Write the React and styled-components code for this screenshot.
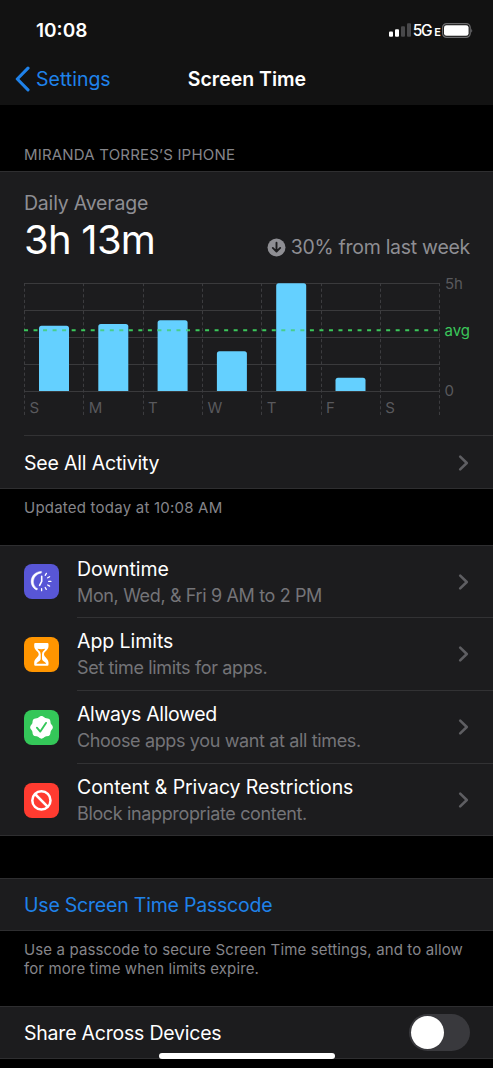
import React from "react";
import styled, { createGlobalStyle } from "styled-components";

const GlobalStyle = createGlobalStyle`
  * { box-sizing: border-box; }
  body { margin: 0; background: #000; }
`;

const Screen = styled.div`
  position: relative;
  width: 493px;
  height: 1068px;
  overflow: hidden;
  background: #000;
  color: #fff;
  font-family: Inter, "Liberation Sans", sans-serif;
  font-size: 19.5px;
  display: flex;
  flex-direction: column;
  white-space: nowrap;
`;

const Header = styled.header`
  height: 105px;
  flex: none;
  background: #121212;
`;

const StatusBar = styled.div`
  display: flex;
  justify-content: space-between;
  align-items: center;
  height: 60px;
  padding: 0 20px 0 36px;
`;

const Clock = styled.span`
  font-size: 19px;
  font-weight: 600;
`;

const StatusIcons = styled.div`
  display: flex;
  align-items: center;
`;

const Network = styled.span`
  font-size: 15.5px;
  font-weight: 500;
  letter-spacing: -1.3px;
  margin: 0 1px 0 1.5px;
  small { font-size: 11px; margin-left: 3px; font-weight: 600; letter-spacing: 0; }
`;

const NavBar = styled.nav`
  display: grid;
  grid-template-columns: 1fr auto 1fr;
  align-items: center;
  height: 38px;
  padding: 0 13px 0 14px;
`;

const BackLink = styled.a`
  display: flex;
  align-items: center;
  gap: 6px;
  color: #1f82ea;
`;

const Title = styled.h1`
  margin: 0;
  font-size: 19.5px;
  font-weight: 600;
`;

const Caption = styled.div`
  height: ${(p) => p.$height}px;
  flex: none;
  padding: ${(p) => p.$top}px 24px 0;
  font-size: 15px;
  line-height: 19.3px;
  letter-spacing: ${(p) => p.$tracking || 0}px;
  color: #85858a;
`;

const Card = styled.section`
  flex: none;
  height: ${(p) => p.$height}px;
  background: #1c1c1e;
  border-top: 1px solid #2e2e30;
  border-bottom: 1px solid #2e2e30;
`;

const Summary = styled.div`
  height: 111px;
  padding: 19px 23px 0 24px;
`;

const SummaryLabel = styled.div`
  color: #8e8e93;
  line-height: 24px;
  letter-spacing: -0.2px;
`;

const SummaryRow = styled.div`
  display: flex;
  justify-content: space-between;
  align-items: flex-start;
`;

const Total = styled.div`
  font-size: 40px;
  line-height: 50px;
  letter-spacing: -0.75px;
`;

const Trend = styled.div`
  display: flex;
  align-items: center;
  gap: 5px;
  padding-top: 20px;
  line-height: 24px;
  letter-spacing: -0.28px;
  color: #8e8e93;
`;

const Chart = styled.svg`
  display: block;
  overflow: visible;
  font-size: 15px;
`;

const Divider = styled.hr`
  height: 1px;
  border: 0;
  margin: 0 0 0 ${(p) => p.$inset}px;
  background: #323234;
`;

const Row = styled.div`
  display: flex;
  align-items: center;
  justify-content: space-between;
  height: ${(p) => p.$height}px;
  padding: 0 23px 0 24px;
  color: ${(p) => p.$color || "#fff"};
  letter-spacing: ${(p) => p.$tracking || 0}px;
`;

const Tile = styled.div`
  width: 35px;
  height: 35px;
  flex: none;
  border-radius: 8px;
  background: ${(p) => p.$color};
  svg { display: block; }
`;

const Texts = styled.div`
  flex: 1;
  padding-left: 18px;
`;

const Name = styled.div`
  padding-top: 1px;
  line-height: 27px;
  letter-spacing: ${(p) => p.$tracking}px;
`;

const Detail = styled.div`
  font-size: 18px;
  line-height: 26px;
  color: #747478;
  letter-spacing: -0.36px;
`;

const Switch = styled.div`
  width: 61px;
  height: 37px;
  padding: 2px;
  border-radius: 19px;
  background: #39393d;
`;

const Knob = styled.div`
  width: 33px;
  height: 33px;
  border-radius: 50%;
  background: #fff;
`;

const HomeIndicator = styled.div`
  position: absolute;
  left: 159px;
  top: 1053px;
  width: 176px;
  height: 6px;
  border-radius: 3px;
  background: #fff;
`;

const Chevron = () => (
  <svg width="12" height="18" viewBox="0 0 12 18" fill="none">
    <path d="M2.2 2.6 L8.8 9 L2.2 15.4" stroke="#5e5e62" strokeWidth="2.6" strokeLinecap="round" strokeLinejoin="round" />
  </svg>
);

const DAYS = [
  { label: "S", top: 42.7 },
  { label: "M", top: 41 },
  { label: "T", top: 37.3 },
  { label: "W", top: 68.3 },
  { label: "T", top: 0.3 },
  { label: "F", top: 94.7 },
  { label: "S", top: null },
];
const STEP = 59.3;
const BASE = 108;

const barPath = (x, top) =>
  `M${x} ${BASE} V${top + 2.5} q0 -2.5 2.5 -2.5 h25 q2.5 0 2.5 2.5 V${BASE} Z`;

function UsageChart() {
  return (
    <Chart width="493" height="152" viewBox="0 0 493 152">
      {[0, 27, 54, 81, 108].map((y) => (
        <rect key={y} x="24" y={y} width="416" height="1" fill="#3a3a3c" />
      ))}
      {[0, 1, 2, 3, 4, 5, 6, 7].map((i) => {
        const x = Math.round(24 + i * STEP) + 0.5;
        return <path key={i} d={`M${x} 0 V132`} stroke="#3c3c3f" strokeDasharray="3.2 2.4" />;
      })}
      <path d="M24 47.2 H440" stroke="#3bc75b" strokeWidth="2" strokeDasharray="4 5.53" />
      {DAYS.map((d, i) => (
        <g key={i}>
          {d.top !== null && <path d={barPath(39 + i * STEP, d.top)} fill="#64d0ff" />}
          <text x={29.5 + i * STEP} y="130" fill="#59595d">{d.label}</text>
        </g>
      ))}
      <path d="M24 47.2 H380" stroke="#48cd8d" strokeWidth="2" strokeDasharray="4 5.53" clipPath="url(#bars)" />
      <clipPath id="bars">
        {DAYS.map((d, i) => d.top !== null && <path key={i} d={barPath(39 + i * STEP, d.top)} />)}
      </clipPath>
      <text x="445" y="6" fill="#59595d">5h</text>
      <text x="444.5" y="53" fill="#3bc75b">avg</text>
      <text x="444.5" y="113" fill="#59595d">0</text>
    </Chart>
  );
}

const DowntimeIcon = () => (
  <svg width="35" height="35" viewBox="0 0 35 35" fill="none" stroke="#fff" strokeLinecap="round">
    <path d="M17.2 7.4 C4.9 8.2 4.4 23 13 26 L13.5 24.6 C7.2 21.4 8 10.6 17.3 8.9 Z" fill="#fff" strokeWidth="0.5" strokeLinejoin="round" />
    <path d="M17.7 12.2 V17.4 L15.6 21.4" strokeWidth="1.6" strokeLinejoin="round" />
    <path d="M21.2 11.3 L22.4 9.4 M23.7 13.8 L25.6 12.7 M24.7 17.4 H26.9 M23.7 21 L25.6 22.1 M21.2 23.5 L22.3 25.4 M17.6 24.6 V26.7" strokeWidth="1.3" />
  </svg>
);

const HourglassIcon = () => (
  <svg width="35" height="35" viewBox="0 0 35 35">
    <path d="M11.3 6 H23.4 Q24.5 6 24.5 7.3 V9.3 C24.5 13.2 20 14.5 20 17.3 C20 20.1 24.5 21.6 24.5 25.6 V27.5 Q24.5 28.8 23.4 28.8 H11.3 Q10.2 28.8 10.2 27.5 V25.6 C10.2 21.6 14.7 20.1 14.7 17.3 C14.7 14.5 10.2 13.2 10.2 9.3 V7.3 Q10.2 6 11.3 6 Z" fill="#fff" />
    <path d="M13.5 11.8 Q17.4 12.7 21.2 11.8 C20 14 18 14.7 18 17.3 V22 C18.3 24.3 21.5 24.7 22.2 26.8 H12.5 C13.2 24.7 16.4 24.3 16.7 22 V17.3 C16.7 14.7 14.7 14 13.5 11.8 Z" fill="#ff9500" />
  </svg>
);

const sealPath = () => {
  const points = [];
  for (let i = 0; i < 120; i += 1) {
    const a = (i / 120) * Math.PI * 2;
    const r = 10.7 + 0.65 * Math.cos(8 * a);
    points.push(`${(17.5 + r * Math.sin(a)).toFixed(2)} ${(17.3 - r * Math.cos(a)).toFixed(2)}`);
  }
  return `M${points.join("L")}Z`;
};

const SealIcon = () => (
  <svg width="35" height="35" viewBox="0 0 35 35">
    <path d={sealPath()} fill="#fff" />
    <path d="M12.9 17.7 L16.3 21.6 L22 12.9" fill="none" stroke="#34c759" strokeWidth="1.9" strokeLinecap="round" strokeLinejoin="round" />
  </svg>
);

const BlockIcon = () => (
  <svg width="35" height="35" viewBox="0 0 35 35" fill="none" stroke="#fff" strokeWidth="2.5">
    <circle cx="17.4" cy="17.4" r="9.1" />
    <path d="M11 11 L23.8 23.8" />
  </svg>
);

const OPTIONS = [
  { name: "Downtime", tracking: -0.1, detail: "Mon, Wed, & Fri 9 AM to 2 PM", color: "#5856d6", Icon: DowntimeIcon },
  { name: "App Limits", tracking: -0.05, detail: "Set time limits for apps.", color: "#ff9500", Icon: HourglassIcon },
  { name: "Always Allowed", tracking: -0.34, detail: "Choose apps you want at all times.", color: "#34c759", Icon: SealIcon },
  { name: "Content & Privacy Restrictions", tracking: -0.08, detail: "Block inappropriate content.", color: "#ff3b30", Icon: BlockIcon },
];

export default function App() {
  return (
    <Screen>
      <GlobalStyle />
      <Header>
        <StatusBar>
          <Clock>10:08</Clock>
          <StatusIcons>
            <svg width="22" height="14" viewBox="0 0 22 14">
              <rect x="0" y="8.5" width="4" height="5.3" rx="1" fill="#fff" />
              <rect x="6" y="6.2" width="4" height="7.6" rx="1" fill="#fff" />
              <rect x="12" y="3.2" width="4" height="10.6" rx="1" fill="#48484a" />
              <rect x="18" y="0.2" width="4" height="13.6" rx="1" fill="#48484a" />
            </svg>
            <Network>5G<small>E</small></Network>
            <svg width="31" height="15" viewBox="0 0 31 15">
              <rect x="0.6" y="0.6" width="27.6" height="13.8" rx="4" fill="none" stroke="#6c6c6e" strokeWidth="1.2" />
              <rect x="2" y="2.2" width="24.6" height="10.6" rx="2.4" fill="#fff" />
              <path d="M29.3 5.2 Q31 7.5 29.3 9.8 Z" fill="#77777a" />
            </svg>
          </StatusIcons>
        </StatusBar>
        <NavBar>
          <BackLink>
            <svg width="16" height="26" viewBox="0 0 16 26" fill="none">
              <path d="M14 2.2 L3.3 13 L14 23.8" stroke="#1f82ea" strokeWidth="3.1" strokeLinecap="round" strokeLinejoin="round" />
            </svg>
            Settings
          </BackLink>
          <Title>Screen Time</Title>
        </NavBar>
      </Header>

      <Caption $height={66} $top={39.5} $tracking={0.19}>MIRANDA TORRES’S IPHONE</Caption>

      <Card $height={318}>
        <Summary>
          <SummaryLabel>Daily Average</SummaryLabel>
          <SummaryRow>
            <Total>3h 13m</Total>
            <Trend>
              <svg width="19" height="19" viewBox="0 0 19 19">
                <circle cx="9.5" cy="9.5" r="9" fill="#8e8e93" />
                <path d="M9.5 4.8 V13.4 M5.8 9.9 L9.5 13.6 L13.2 9.9" fill="none" stroke="#1c1c1e" strokeWidth="1.9" strokeLinecap="round" strokeLinejoin="round" />
              </svg>
              30% from last week
            </Trend>
          </SummaryRow>
        </Summary>
        <UsageChart />
        <Divider $inset={24} />
        <Row $height={53} $tracking={-0.18}>See All Activity<Chevron /></Row>
      </Card>

      <Caption $height={56} $top={9} $tracking={0.22}>Updated today at 10:08 AM</Caption>

      <Card $height={291}>
        {OPTIONS.map(({ name, tracking, detail, color, Icon }, i) => (
          <React.Fragment key={name}>
            {i > 0 && <Divider $inset={77} />}
            <Row $height={i === 0 ? 71 : 72}>
              <Tile $color={color}><Icon /></Tile>
              <Texts>
                <Name $tracking={tracking}>{name}</Name>
                <Detail>{detail}</Detail>
              </Texts>
              <Chevron />
            </Row>
          </React.Fragment>
        ))}
      </Card>

      <Caption $height={42} $top={0} />

      <Card $height={53}>
        <Row $height={51} $color="#1f82ea" $tracking={-0.21}>Use Screen Time Passcode</Row>
      </Card>

      <Caption $height={75} $top={8.5} $tracking={0.125}>
        Use a passcode to secure Screen Time settings, and to allow
        <br />
        for more time when limits expire.
      </Caption>

      <Card $height={53}>
        <Row $height={51} $tracking={-0.22}>
          Share Across Devices
          <Switch><Knob /></Switch>
        </Row>
      </Card>
      <HomeIndicator />
    </Screen>
  );
}
